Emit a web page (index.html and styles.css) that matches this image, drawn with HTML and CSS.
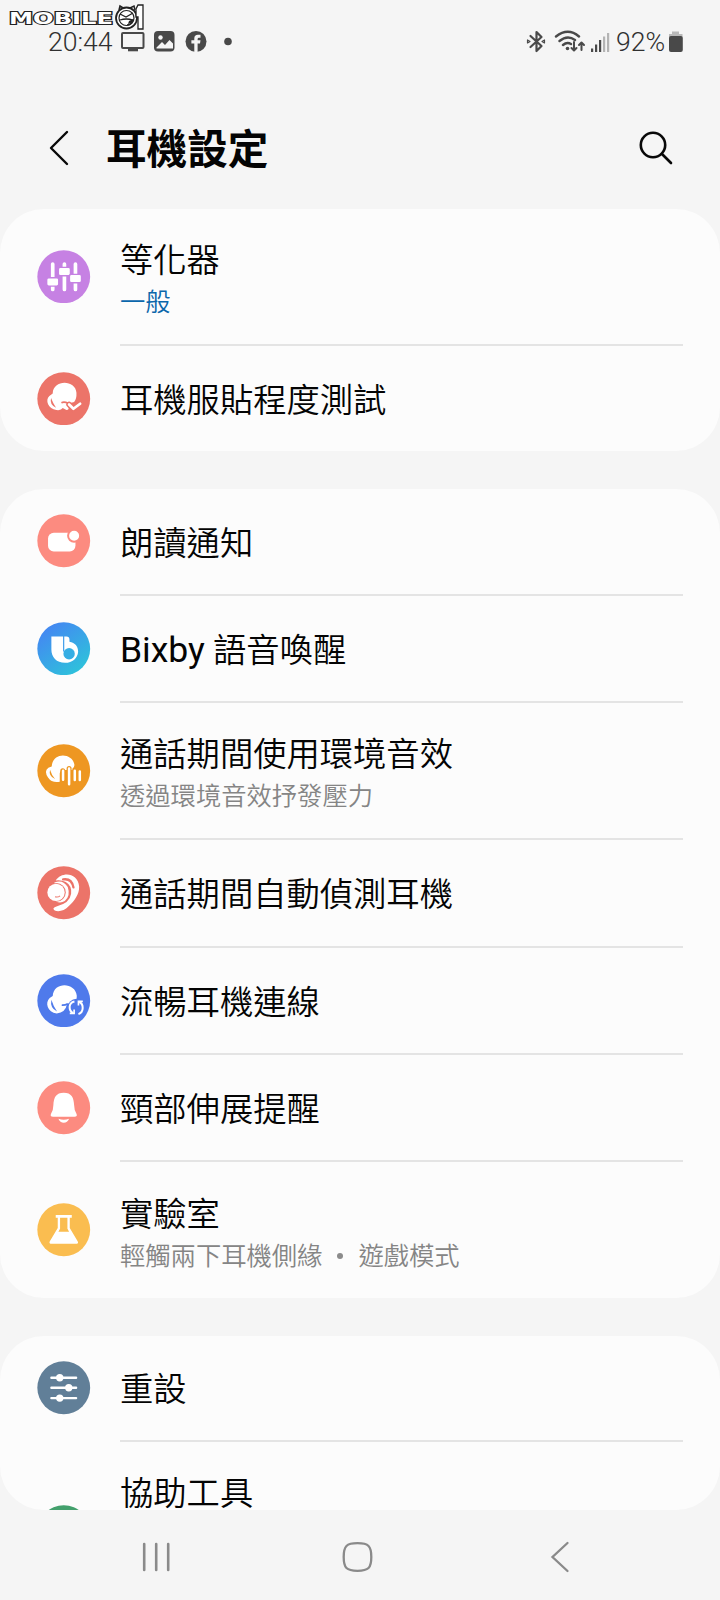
FILE: index.html
```html
<!DOCTYPE html>
<html lang="zh-Hant">
<head>
<meta charset="utf-8">
<title>耳機設定</title>
<link rel="stylesheet" href="styles.css">
</head>
<body>
<div class="screen">
  <svg class="watermark" width="150" height="34" viewBox="0 0 150 34">
    <text class="watermark-text" x="9" y="23.500" textLength="104" lengthAdjust="spacingAndGlyphs">MOBILE</text>
    <path d="M119 10L120 6L124 8.500H129L134 6L135 10" fill="#fff" stroke="#222" stroke-width="1.500"/>
    <circle cx="126.500" cy="18" r="10.500" fill="#fff" stroke="#222" stroke-width="1.800"/>
    <circle cx="126.500" cy="18" r="7.500" fill="#fff" stroke="#222" stroke-width="1.200"/>
    <path d="M120 14L126 17L133 13M120 20Q126 18 133 20Q131 25 127 25" fill="none" stroke="#222" stroke-width="1.300"/>
    <path d="M128 24Q133 23 133 19L129 21Z" fill="#222"/>
    <path d="M138 5H143V29H138V17H136V9Z" fill="#fff" stroke="#222" stroke-width="1.300"/>
  </svg>

  <header class="status">
    <span class="clock">20:44</span>
    <svg class="status-left" width="114" height="24" viewBox="0 0 114 24">
      <g fill="none" stroke="#494949">
        <rect x="2" y="3" width="21.500" height="15" rx="1" stroke-width="2"/>
        <path d="M8 20H18" stroke-width="2.600"/>
      </g>
      <rect x="34" y="1" width="20.500" height="20.500" rx="4" fill="#494949"/>
      <circle cx="40.500" cy="7.500" r="2.200" fill="#f5f5f5"/>
      <path d="M36.500 17.500L42 12L45 15L49.500 10L53 13.500V18.500H36.500Z" fill="#f5f5f5"/>
      <circle cx="76" cy="11.500" r="10.500" fill="#494949"/>
      <path d="M74.300 22V13.500H71.400V10.300H74.300V8.500Q74.300 4.800 78 4.800H80.500V7.800H79Q77.600 7.800 77.600 9.200V10.300H80.500L80 13.500H77.600V22Z" fill="#f5f5f5"/>
      <circle cx="108" cy="11.500" r="3.800" fill="#494949"/>
    </svg>
    <svg class="status-right" width="90" height="28" viewBox="0 0 90 28">
      <g fill="none" stroke="#494949" stroke-width="2.200" stroke-linecap="round" stroke-linejoin="round">
        <path d="M4.500 8L15.500 18L10.500 23V4L15.500 9L4.500 19"/>
        <path d="M1.500 12V15L4 13.500ZM18.500 12V15L16 13.500Z" stroke-width="1.200"/>
        <path d="M30 8.500Q42 -1 53 8.500M33.500 13Q41.500 6.500 49 12M37 17Q41 13.500 45 16" stroke-width="2.400"/>
        <path d="M48 14V22M45.500 20L48 22.500L50.500 20M55.500 22V14.500M53 17L55.500 14.500L58 17" stroke-width="2"/>
      </g>
      <circle cx="41.500" cy="20.500" r="1.800" fill="#494949"/>
      <path d="M65 20.500H67.200V24H65ZM69 16.500H71.200V24H69ZM73 12H75.200V24H73Z" fill="#494949"/>
      <path d="M77 8.500H79.200V24H77ZM81 5H83.200V24H81Z" fill="#b4b4b4"/>
    </svg>
    <span class="percent">92%</span>
    <svg class="battery" width="16" height="22" viewBox="0 0 16 22">
      <path d="M4 .500H11V3H14.500V6.500H1V3H4Z" fill="#b9b9b9"/>
      <rect x="1" y="5" width="13.800" height="16" rx="2" fill="#494949"/>
    </svg>
  </header>

  <div class="appbar">
    <svg class="back" width="24" height="40" viewBox="0 0 24 40"><path d="M20 4L4 20L20 36" fill="none" stroke="#080808" stroke-width="2.400" stroke-linecap="round" stroke-linejoin="round"/></svg>
    <h1 class="heading">耳機設定</h1>
    <svg class="search" width="36" height="36" viewBox="0 0 36 36"><g fill="none" stroke="#080808" stroke-width="2.600" stroke-linecap="round"><circle cx="15" cy="15" r="12.200"/><path d="M24 24L33 33"/></g></svg>
  </div>

  <main class="content">
    <section class="card">
      <div class="row double">
        <svg class="icon" viewBox="-80 -80 160 160"><circle r="79" fill="#c681e3"/>
          <path d="M-33 -38V38M2 -38V38M35 -38V38" stroke="#fff" stroke-width="11" stroke-linecap="round"/>
          <g fill="#fff" stroke="#c681e3" stroke-width="4"><rect x="-51" y="3" width="36" height="25" rx="6"/><rect x="-16" y="-28" width="36" height="25" rx="6"/><rect x="17" y="-7" width="36" height="25" rx="6"/></g>
        </svg>
        <div class="label"><div class="title">等化器</div><div class="sub accent">一般</div></div>
      </div>
      <div class="row last-single">
        <svg class="icon" viewBox="-80 -80 160 160"><circle r="79" fill="#ec7469"/>
          <path d="M-33 -16C-32 -58 35 -58 38 -18Q39 0 31 10L14 14Q18 34 8 34L-3 28Q-8 36 -22 34C-46 30 -57 5 -43 -8Z" fill="#fff"/>
          <path d="M-38 -2Q-43 18 -23 27Q-32 14 -38 -2Z" fill="#ec7469"/>
          <path d="M-7 12Q1 8 12 13" fill="none" stroke="#ec7469" stroke-width="5"/>
          <path d="M16 17L29 30L50 14" fill="none" stroke="#ec7469" stroke-width="17" stroke-linecap="round"/>
          <path d="M16 17L29 30L49 15" fill="none" stroke="#fff" stroke-width="8" stroke-linecap="round" stroke-linejoin="round"/>
        </svg>
        <div class="label"><div class="title">耳機服貼程度測試</div></div>
      </div>
    </section>

    <section class="card">
      <div class="row">
        <svg class="icon" viewBox="-80 -80 160 160"><circle r="79" fill="#fc8b80"/>
          <rect x="-47" y="-24" width="82" height="56" rx="17" fill="#fff"/><circle cx="31" cy="-15" r="18" fill="#fff" stroke="#fc8b80" stroke-width="6"/>
        </svg>
        <div class="label"><div class="title">朗讀通知</div></div>
      </div>
      <div class="row">
        <svg class="icon" viewBox="-80 -80 160 160">
          <defs>
            <linearGradient id="bixby" gradientUnits="userSpaceOnUse" x1="-45" y1="-60" x2="45" y2="60"><stop offset="0" stop-color="#438af1"/><stop offset="1" stop-color="#2fbfdc"/></linearGradient>
          </defs>
          <circle r="79" fill="url(#bixby)"/>
          <path d="M-37 -37H8Q17 -37 17 -28V-21C34 -19 43 -6 43 8C42 28 26 42 4 42C-22 42 -37 25 -37 2Z" fill="#fff"/>
          <path d="M-2 -38H1.500V8H-2Z" fill="#3b9bea"/>
          <circle cx="16" cy="15" r="17" fill="#36aee4"/>
        </svg>
        <div class="label"><div class="title"><span class="latin">Bixby</span> 語音喚醒</div></div>
      </div>
      <div class="row double">
        <svg class="icon" viewBox="-80 -80 160 160"><circle r="79" fill="#ee9722"/>
          <path d="M-36 -13C-33 -57 27 -54 32 -17L28 -2H12Q-12 -4 -12 8V33Q-36 37 -47 20Q-60 1 -46 -9Z" fill="#fff"/>
          <path d="M-41 -3Q-46 16 -26 25Q-36 14 -41 -3Z" fill="#ee9722"/>
          <path d="M-3 0V24M16 -7V36M33 -3V27M48 2V27" stroke="#ee9722" stroke-width="15" stroke-linecap="round"/>
          <path d="M-2 0V27M16 -7V40M33 0V28M48 2V28" stroke="#fff" stroke-width="7.500" stroke-linecap="round"/>
        </svg>
        <div class="label"><div class="title">通話期間使用環境音效</div><div class="sub">透過環境音效抒發壓力</div></div>
      </div>
      <div class="row">
        <svg class="icon" viewBox="-80 -80 160 160"><circle r="79" fill="#ec7469"/>
          <path d="M-24 -37C-6 -65 43 -61 46 -19C47 5 31 24 16 39C-3 61 -31 57 -31 47Q-29 42 -20 40Q18 31 22 3Q25 -21 6 -32Q-6 -39 -24 -37Z" fill="#fff"/>
          <path d="M-2 -40Q24 -44 29 -16" fill="none" stroke="#ec7469" stroke-width="7" stroke-linecap="round"/>
          <path d="M-28 -31Q-2 -41 12 -17Q21 10 3 25Q-8 32 -23 27Z" fill="#fff"/>
          <circle cx="-22" cy="-1" r="28" fill="#ec7469"/><circle cx="-23" cy="-1" r="26" fill="#fff"/>
          <path d="M-26 12Q-18 15 -11 9" fill="none" stroke="#ec7469" stroke-width="3"/>
        </svg>
        <div class="label"><div class="title">通話期間自動偵測耳機</div></div>
      </div>
      <div class="row">
        <svg class="icon" viewBox="-80 -80 160 160"><circle r="79" fill="#4f7aeb"/>
          <path d="M-33 -14C-30 -58 35 -55 39 -15L38 2L10 9Q5 36 -21 38C-49 36 -57 5 -42 -8Z" fill="#fff"/>
          <path d="M-37 -3Q-42 22 -20 32Q-31 17 -37 -3Z" fill="#4f7aeb"/>
          <circle cx="38" cy="21" r="27" fill="#4f7aeb"/><path d="M-6 13Q3 14 12 9" stroke="#4f7aeb" stroke-width="5" fill="none"/>
          <g fill="none" stroke="#fff" stroke-width="6"><path d="M32 2C13 6 14 29 28 37M44 40C61 34 60 10 46 3"/><path d="M18 38H31V26M57 2H44V14" stroke-width="5"/></g>
        </svg>
        <div class="label"><div class="title">流暢耳機連線</div></div>
      </div>
      <div class="row">
        <svg class="icon" viewBox="-80 -80 160 160"><circle r="79" fill="#fc8b80"/>
          <path d="M0 -45C-23 -45 -30 -31 -31 -8Q-31 7 -38 18Q-42 27 -32 27H32Q42 27 38 18Q31 7 31 -8C30 -31 23 -45 0 -45Z" fill="#fff"/><path d="M-16 33Q0 39 16 33Q11 45 0 45Q-11 45 -16 33Z" fill="#fff"/>
        </svg>
        <div class="label"><div class="title">頸部伸展提醒</div></div>
      </div>
      <div class="row double final">
        <svg class="icon" viewBox="-80 -80 160 160"><circle r="79" fill="#fabd50"/>
          <path d="M-24 -44H24V-36H18V-5L42 35Q45 42 36 42H-36Q-45 42 -42 35L-18 -5V-36H-24Z" fill="#fff"/><path d="M-11 -36H11V-3L16 6H-16L-11 -3Z" fill="#fabd50"/>
        </svg>
        <div class="label"><div class="title">實驗室</div><div class="sub">輕觸兩下耳機側緣<span class="dot"></span>遊戲模式</div></div>
      </div>
    </section>

    <section class="card cut">
      <div class="row first">
        <svg class="icon" viewBox="-80 -80 160 160"><circle r="79" fill="#617f98"/>
          <path d="M-37 -30H37M-37 0H37M-37 31H37" stroke="#fff" stroke-width="7" stroke-linecap="round"/><g fill="#fff"><circle cx="-12" cy="-30" r="11"/><circle cx="15" cy="0" r="11"/><circle cx="-12" cy="31" r="11"/></g>
        </svg>
        <div class="label"><div class="title">重設</div></div>
      </div>
      <div class="row tall">
        <svg class="icon" viewBox="-80 -80 160 160"><circle r="79" fill="#43a06c"/></svg>
        <div class="label"><div class="title">協助工具</div></div>
      </div>
    </section>
  </main>

  <nav class="navbar">
    <svg width="46" height="34" viewBox="0 0 46 34"><path d="M10.200 4V30M22.200 4V30M34.200 4V30" stroke="#8a8a8a" stroke-width="2.600" stroke-linecap="round"/></svg>
    <svg width="46" height="34" viewBox="0 0 46 34"><path d="M21.500 3.200C32.500 3.200 35.300 6 35.300 17S32.500 30.800 21.500 30.800S7.700 28 7.700 17S10.500 3.200 21.500 3.200Z" fill="none" stroke="#8a8a8a" stroke-width="2.300"/></svg>
    <svg width="46" height="34" viewBox="0 0 46 34"><path d="M30.500 3L15.500 17L30.500 31" fill="none" stroke="#8a8a8a" stroke-width="2.300" stroke-linecap="round"/></svg>
  </nav>
</div>
</body>
</html>
```

FILE: styles.css
```css
body {
  margin: 0;
  background: #f5f5f5;
}

.screen {
  position: relative;
  display: flex;
  flex-direction: column;
  width: 720px;
  height: 1600px;
  overflow: hidden;
  background: #f5f5f5;
  color: #040404;
  font-family: Roboto, "Noto Sans CJK TC", sans-serif;
}

/* Logo lies over the status bar */
.watermark {
  position: absolute;
  top: 0;
  left: 0;
}

.watermark-text {
  font: 700 16px "DejaVu Sans", sans-serif;
  fill: #fff;
  stroke: #222;
  stroke-width: 2px;
  paint-order: stroke;
}

.status {
  display: flex;
  flex: none;
  align-items: center;
  box-sizing: border-box;
  height: 82px;
  padding: 1px 36px 0 48px;
  color: #303030;
  font-size: 26.6px;
  font-weight: 300;
  line-height: 30px;
}

.clock {
  width: 65px;
}

.status-left {
  margin-left: 7px;
}

.status-right {
  margin-left: auto;
}

.percent {
  width: 52px;
  margin-left: 0;
}

.battery {
  margin-left: 0;
}

.appbar {
  display: flex;
  flex: none;
  align-items: center;
  box-sizing: border-box;
  height: 127px;
  padding: 8px 46px 3px 47px;
}

.heading {
  flex: 1;
  margin: 4px 0 0 35px;
  font-size: 40.6px;
  line-height: 50px;
  font-weight: 700;
}

.content {
  display: flex;
  flex: none;
  flex-direction: column;
  gap: 38px;
  height: 1301px;
}

.card {
  flex: none;
  border-radius: 44px;
  background: #fcfcfc;
  overflow: hidden;
}

.cut {
  height: 174px;
}

.row {
  display: flex;
  align-items: center;
  gap: 29.5px;
  box-sizing: border-box;
  height: 107.4px;
  padding: 0 37px;
}

.double {
  height: 137px;
}

.last-single {
  height: 104.5px;
}

.final {
  height: 135.5px;
}

.first {
  height: 106px;
}

.tall {
  height: 178px;
}

.icon {
  flex: none;
  width: 53.5px;
  height: 53.5px;
  margin-bottom: 2px;
}

.last-single .icon,
.final .icon {
  margin-bottom: 0;
}

.tall .icon {
  margin: 2px 0 0;
}

.label {
  display: flex;
  flex: 1;
  flex-direction: column;
  justify-content: center;
  box-sizing: border-box;
  height: 100%;
  padding-top: 5px;
  border-bottom: 2px solid #e4e4e4;
}

.row:last-child .label {
  border-bottom: 0;
}

.title {
  font-size: 33.3px;
  font-weight: 350;
  line-height: 48px;
}

.latin {
  font-size: 35.5px;
  font-weight: 400;
  line-height: 1;
}

.sub {
  color: #858585;
  font-size: 25.3px;
  font-weight: 350;
  line-height: 36px;
}

.accent {
  color: #0b67ab;
}

.tall .label {
  justify-content: flex-start;
  padding-top: 28px;
}

.dot {
  display: inline-block;
  width: 6px;
  height: 6px;
  margin: 0 15px;
  border-radius: 50%;
  background: #8b8b8b;
  vertical-align: 6px;
}

.navbar {
  display: flex;
  flex: none;
  align-items: center;
  justify-content: space-between;
  box-sizing: border-box;
  height: 90px;
  padding: 3px 137px 0 134px;
}
```
